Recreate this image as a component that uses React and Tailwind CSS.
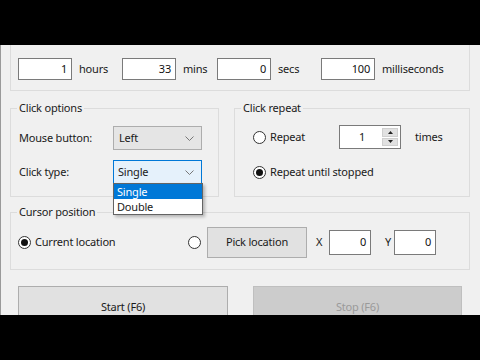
const font = { fontFamily: '"Noto Sans", "Liberation Sans", sans-serif' }

function TextBox({ value, className = '' }) {
  return (
    <div className={`h-[22px] bg-white border border-[#7a7a7a] flex items-center justify-end pr-[4px] text-[#111] ${className}`}>
      {value}
    </div>
  )
}

function Radio({ checked }) {
  return (
    <div className="w-[13px] h-[13px] rounded-full border border-[#333] bg-white flex items-center justify-center shrink-0">
      {checked && <div className="w-[7px] h-[7px] rounded-full bg-[#111]" />}
    </div>
  )
}

function Chevron() {
  return (
    <svg width="9" height="5" viewBox="0 0 9 5" className="shrink-0">
      <polyline points="0.5,0.5 4.5,4.5 8.5,0.5" fill="none" stroke="#777" strokeWidth="1" />
    </svg>
  )
}

function Group({ label, className = '', children }) {
  return (
    <div className={`relative border border-[#dcdcdc] ${className}`}>
      <span className="absolute -top-[9px] left-[6px] px-[2px] bg-[#f0f0f0] leading-[16px]">{label}</span>
      {children}
    </div>
  )
}

export default function App() {
  return (
    <div className="w-[480px] h-[360px] bg-black flex flex-col overflow-hidden text-[11px] tracking-[-0.2px] text-[#1a1a1a]" style={font}>
      <div className="h-[45px] shrink-0" />
      <div className="h-[270px] shrink-0 bg-[#f0f0f0] border-l border-[#9a9a9a] pl-[9px] pr-[10px] flex flex-col overflow-hidden">
        {/* timer interval */}
        <div className="h-[46px] shrink-0 border-x border-b border-[#dcdcdc] pl-[7px] pt-[13px] flex items-start">
          {[
            { v: '1', label: 'hours', w: 'w-[104px]' },
            { v: '33', label: 'mins', w: 'w-[95px]' },
            { v: '0', label: 'secs', w: 'w-[104px]' },
            { v: '100', label: 'milliseconds', w: '' },
          ].map(item => (
            <div key={item.label} className={`flex items-center shrink-0 ${item.w}`}>
              <TextBox value={item.v} className="w-[54px]" />
              <span className="ml-[7px]">{item.label}</span>
            </div>
          ))}
        </div>

        <div className="mt-[17px] flex gap-[15px] shrink-0">
          <Group label="Click options" className="w-[209px] h-[89px] pt-[17px] pl-[8px] flex flex-col gap-[10px]">
            <div className="flex items-center h-[24px]">
              <span className="w-[94px]">Mouse button:</span>
              <div className="w-[89px] h-[24px] bg-[#e5e5e5] border border-[#adadad] flex items-center justify-between pl-[5px] pr-[7px]">
                <span>Left</span>
                <Chevron />
              </div>
            </div>
            <div className="flex items-center h-[24px]">
              <span className="w-[94px]">Click type:</span>
              <div className="relative w-[89px] h-[24px] bg-[#e5f1fb] border border-[#0078d7] flex items-center justify-between pl-[4px] pr-[7px]">
                <span>Single</span>
                <Chevron />
                <div className="absolute z-10 top-[22px] -left-px w-[90px] bg-white border border-[#646464] shadow-[2px_2px_3px_rgba(0,0,0,0.25)] leading-[15px]">
                  <div className="bg-[#0078d7] text-white pl-[3px] h-[15px]">Single</div>
                  <div className="pl-[3px] h-[15px]">Double</div>
                </div>
              </div>
            </div>
          </Group>

          <Group label="Click repeat" className="w-[236px] h-[89px] pt-[16px] pl-[18px] flex flex-col gap-[11px]">
            <div className="flex items-center h-[24px]">
              <div className="w-[86px] flex items-center gap-[4px]">
                <Radio />
                <span>Repeat</span>
              </div>
              <div className="w-[62px] h-[24px] bg-white border border-[#7a7a7a] flex">
                <div className="flex-1 flex items-center justify-center pl-[2px]">1</div>
                <div className="w-[16px] my-[2px] mr-[2px] flex flex-col gap-px">
                  <div className="flex-1 bg-[#e1e1e1] border border-[#cfcfcf] flex items-center justify-center">
                    <svg width="5" height="3" viewBox="0 0 5 3"><polygon points="2.5,0 5,3 0,3" fill="#222" /></svg>
                  </div>
                  <div className="flex-1 bg-[#e1e1e1] border border-[#cfcfcf] flex items-center justify-center">
                    <svg width="5" height="3" viewBox="0 0 5 3"><polygon points="0,0 5,0 2.5,3" fill="#222" /></svg>
                  </div>
                </div>
              </div>
              <span className="ml-[14px]">times</span>
            </div>
            <div className="flex items-center h-[24px] gap-[4px]">
              <Radio checked />
              <span>Repeat until stopped</span>
            </div>
          </Group>
        </div>

        <Group label="Cursor position" className="mt-[15px] h-[58px] shrink-0 pl-[7px] pt-[14px] flex items-start">
          <div className="w-[170px] h-[31px] flex items-center gap-[4px] shrink-0">
            <Radio checked />
            <span>Current location</span>
          </div>
          <div className="h-[31px] flex items-center shrink-0">
            <Radio />
          </div>
          <div className="ml-[6px] w-[100px] h-[31px] bg-[#e1e1e1] border border-[#adadad] flex items-center justify-center shrink-0">
            Pick location
          </div>
          <div className="h-[31px] flex items-center shrink-0">
            <span className="ml-[9px] w-[13px]">X</span>
            <TextBox value="0" className="w-[42px] h-[25px]" />
            <span className="ml-[14px] w-[9px]">Y</span>
            <TextBox value="0" className="w-[42px] h-[25px]" />
          </div>
        </Group>

        <div className="mt-[16px] ml-[8px] flex gap-[25px] shrink-0">
          <div className="w-[210px] h-[42px] bg-[#e1e1e1] border border-[#adadad] flex items-center justify-center">
            Start (F6)
          </div>
          <div className="w-[209px] h-[42px] bg-[#cccccc] border border-[#bfbfbf] text-[#9a9a9a] flex items-center justify-center">
            Stop (F6)
          </div>
        </div>
      </div>
    </div>
  )
}
